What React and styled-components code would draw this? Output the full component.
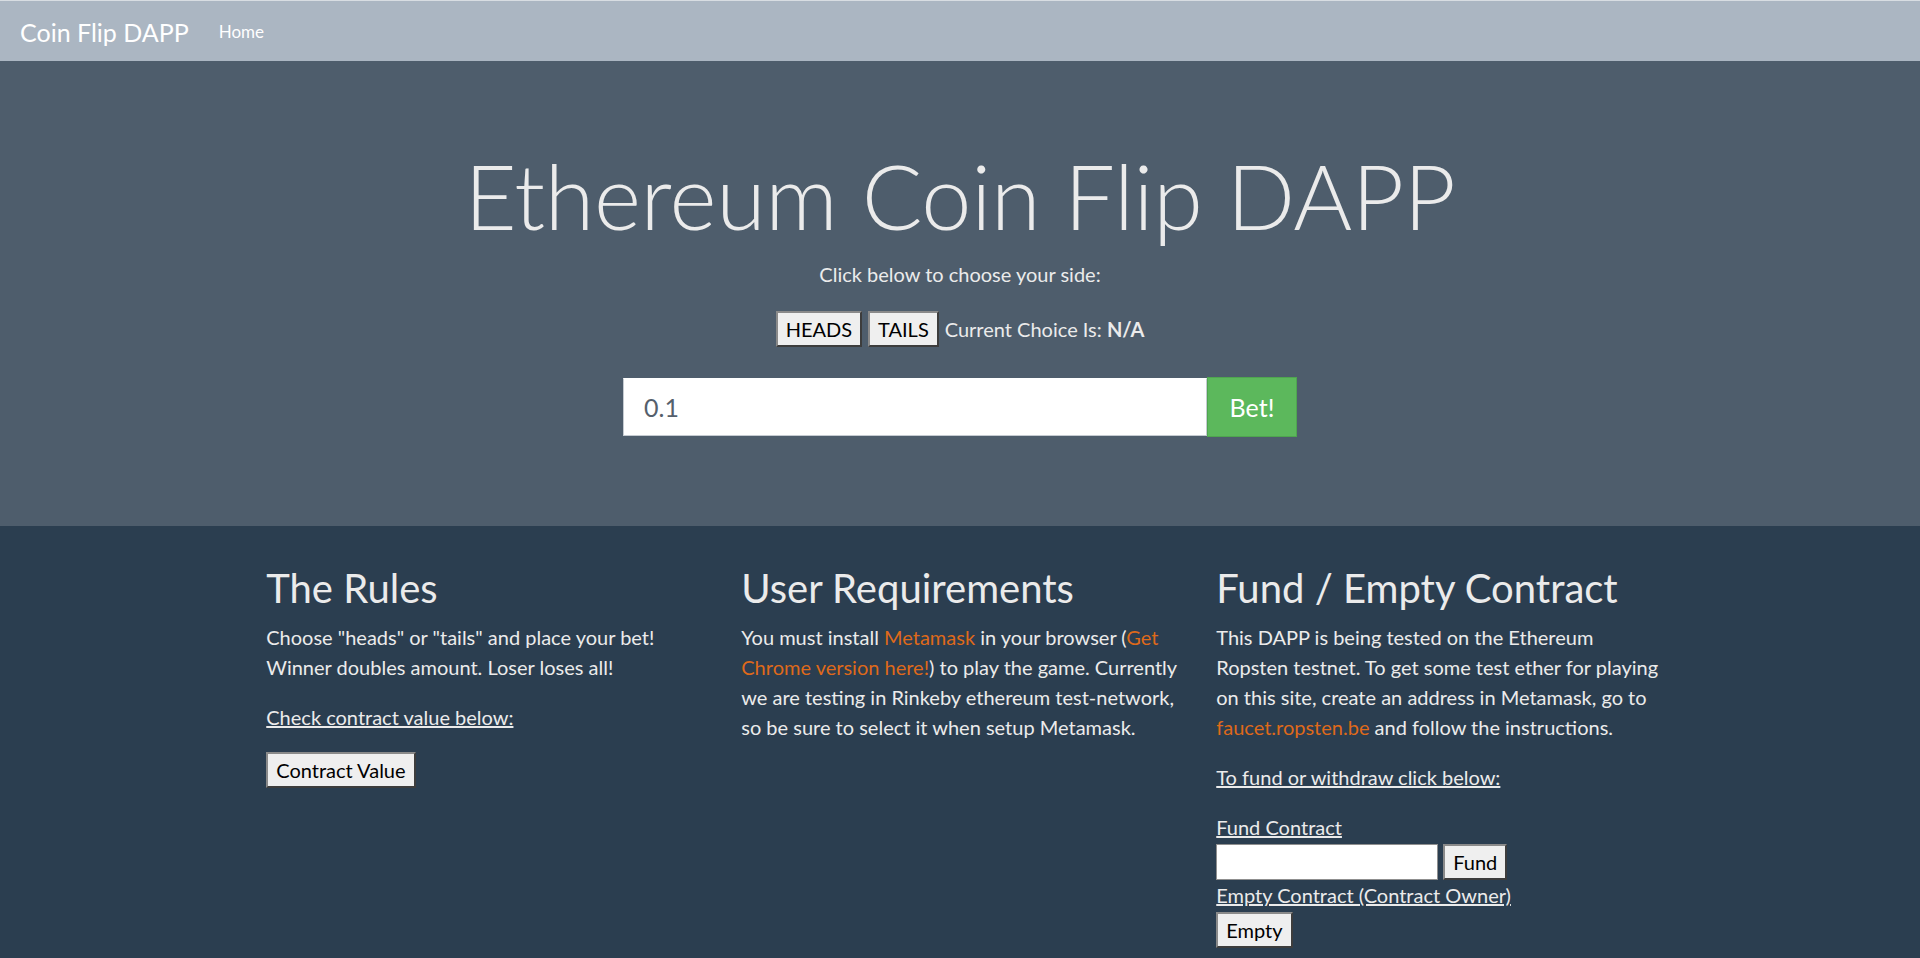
import styled, { createGlobalStyle } from "styled-components";

const GlobalStyle = createGlobalStyle`
  * {
    box-sizing: border-box;
  }
  html,
  body {
    margin: 0;
    padding: 0;
  }
  body {
    background: #2b3e50;
    color: #ebebeb;
    font-family: Lato, "Open Sans", "Liberation Sans", sans-serif;
    font-size: 20px;
    line-height: 30px;
  }
`;

const App = () => {
  return (
    <>
      <GlobalStyle />
      <Navbar>
        <Brand>Coin Flip DAPP</Brand>
        <NavLink>Home</NavLink>
      </Navbar>
      <Jumbotron>
        <Title>Ethereum Coin Flip DAPP</Title>
        <Lead>Click below to choose your side:</Lead>
        <ChoiceRow>
          <Button>HEADS</Button>
          <Button>TAILS</Button>
          <span>
            Current Choice Is: <b>N/A</b>
          </span>
        </ChoiceRow>
        <BetGroup>
          <BetInput defaultValue="0.1" />
          <BetButton>Bet!</BetButton>
        </BetGroup>
      </Jumbotron>
      <Container>
        <Column>
          <Heading>The Rules</Heading>
          <Text>
            Choose "heads" or "tails" and place your bet! Winner doubles
            amount. Loser loses all!
          </Text>
          <Text>
            <u>Check contract value below:</u>
          </Text>
          <Field>
            <Button>Contract Value</Button>
          </Field>
        </Column>
        <Column>
          <Heading>User Requirements</Heading>
          <Text>
            You must install <Link>Metamask</Link> in your browser (
            <Link>Get Chrome version here!</Link>) to play the game. Currently
            we are testing in Rinkeby ethereum test-network, so be sure to
            select it when setup Metamask.
          </Text>
        </Column>
        <Column>
          <Heading>Fund / Empty Contract</Heading>
          <Text $nowrap>
            This DAPP is being tested on the Ethereum
            <br />
            Ropsten testnet. To get some test ether for playing
            <br />
            on this site, create an address in Metamask, go to
            <br />
            <Link>faucet.ropsten.be</Link> and follow the instructions.
          </Text>
          <Text>
            <u>To fund or withdraw click below:</u>
          </Text>
          <Label>Fund Contract</Label>
          <Field>
            <FundInput />
            <Button>Fund</Button>
          </Field>
          <Label>Empty Contract (Contract Owner)</Label>
          <Field>
            <Button>Empty</Button>
          </Field>
        </Column>
      </Container>
    </>
  );
};

export default App;

const Navbar = styled.nav`
  display: flex;
  align-items: center;
  height: 61px;
  padding: 2px 20px 0;
  background: #abb6c2;
  border-top: 1px solid #d8dde2;
`;

const Brand = styled.a`
  font-size: 25px;
  line-height: 37px;
  color: #fff;
  margin-right: 20px;
`;

const NavLink = styled.a`
  font-size: 17px;
  padding: 0 10px;
  color: #fff;
`;

const Jumbotron = styled.header`
  background: #4e5d6c;
  padding: 80px 40px;
  margin-bottom: 38px;
  text-align: center;
`;

const Title = styled.h1`
  margin: 0 0 10px;
  font-size: 90px;
  font-weight: 300;
  line-height: 1.2;
  letter-spacing: -0.3px;
  color: #ebebeb;
`;

const Lead = styled.p`
  margin: 0 0 22px;
`;

const ChoiceRow = styled.div`
  display: flex;
  justify-content: center;
  align-items: center;
  gap: 6px;
  height: 36px;
  margin-bottom: 30px;
`;

const Button = styled.button`
  height: 36px;
  padding: 0 8px;
  font-family: inherit;
  font-size: 20px;
  line-height: 30px;
  color: #000;
  background: #efefef;
  border: 2px solid;
  border-color: #8a8a8a #3d3d3d #3d3d3d #8a8a8a;
  border-radius: 0;
`;

const BetGroup = styled.div`
  display: flex;
  align-items: center;
  width: 674px;
  height: 60px;
  margin: 0 auto 9px;
`;

const BetInput = styled.input`
  flex: 1;
  height: 58px;
  padding: 0 20px;
  font-family: inherit;
  font-size: 25px;
  color: #55606c;
  background: #fff;
  border: 1px solid #c5cbd1;
  border-top-color: #fff;
  border-radius: 0;
  outline: none;
`;

const BetButton = styled.button`
  width: 90px;
  height: 60px;
  font-family: inherit;
  font-size: 25px;
  color: #fff;
  background: #5cb85c;
  border: 1px solid #4fa54f;
  border-radius: 0;
`;

const Container = styled.main`
  display: grid;
  grid-template-columns: repeat(3, minmax(0, 1fr));
  width: 1425px;
  margin: 0 auto;
`;

const Column = styled.section`
  padding: 0 18.75px;
  text-align: left;
`;

const Heading = styled.h2`
  margin: 0 0 10px;
  font-size: 40px;
  font-weight: 400;
  line-height: 48px;
  color: #ebebeb;
`;

const Text = styled.p`
  margin: 0 0 20px;
  white-space: ${(p) => (p.$nowrap ? "nowrap" : "normal")};
`;

const Link = styled.a`
  color: #df691a;
  text-decoration: none;
`;

const Label = styled.u`
  display: block;
`;

const Field = styled.div`
  display: flex;
  align-items: center;
  gap: 5px;
  margin-top: 2px;
`;

const FundInput = styled.input`
  width: 222px;
  height: 36px;
  font-family: inherit;
  font-size: 20px;
  background: #fff;
  border: 1px solid #8f8f8f;
  border-radius: 0;
`;
